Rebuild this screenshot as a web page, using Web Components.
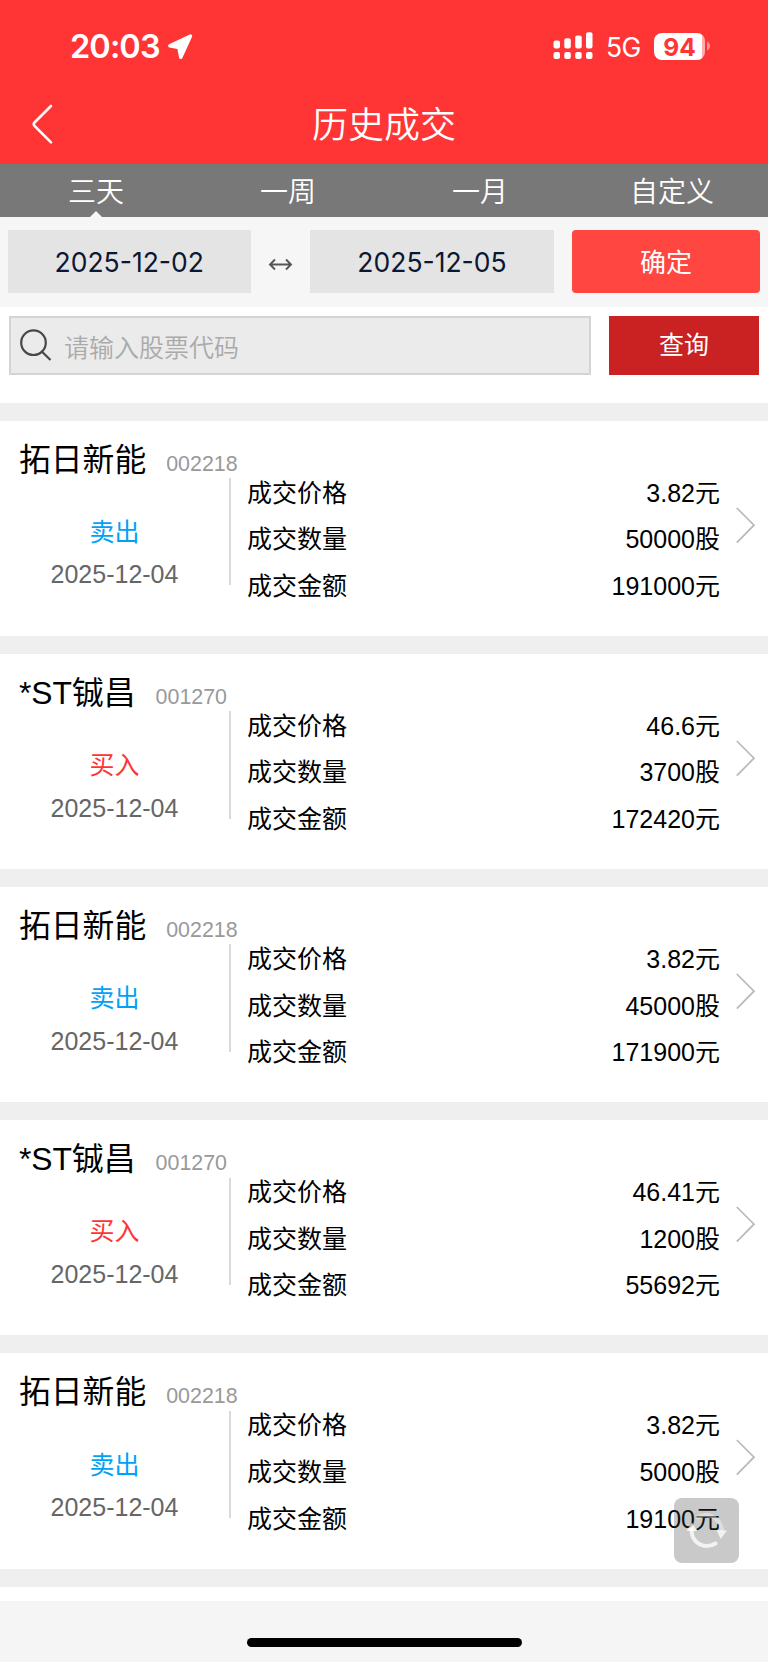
<!DOCTYPE html>
<html lang="zh-CN">
<head>
<meta charset="UTF-8">
<meta name="viewport" content="width=device-width, initial-scale=1.0">
<title>历史成交</title>
<style>
  * {
    margin: 0;
    padding: 0;
    box-sizing: border-box;
  }
  body {
    background-color: white;
    font-family: "Liberation Sans", "Noto Sans CJK SC", sans-serif;
    color: #000;
  }
</style>
</head>
<body>
<trade-app></trade-app>

<script>
class StatusBar extends HTMLElement {
  constructor() {
    super();
    this.shadowDOM = this.attachShadow({mode: 'open'});
  }

  connectedCallback() {
    this.render();
  }

  render() {
    this.shadowDOM.innerHTML = `
      <style>
        :host {
          display: flex;
          align-items: center;
          box-sizing: border-box;
          height: 92px;
          padding: 0 57px 0 70px;
          color: white;
          font-family: Inter, sans-serif;
          white-space: nowrap;
        }
        svg { display: block; flex: none; }
        .time { font-size: 32.5px; font-weight: 600; width: 97px; letter-spacing: -0.9px; }
        .signal { margin-left: auto; }
        .network { font-size: 26.5px; width: 48px; margin-left: 13px; line-height: 32px; padding-top: 2px; letter-spacing: -0.7px; }
        .battery { display: flex; align-items: center; }
        .level {
          width: 51px;
          height: 27px;
          border-radius: 8px;
          background: linear-gradient(to right, white 48px, #ffadad 48px);
          color: #ff3434;
          font-size: 24.5px;
          font-weight: 700;
          line-height: 28px;
          text-align: center;
        }
      </style>
      <span class="time">20:03</span>
      <svg width="27" height="27" viewBox="0 0 27 27"><path d="M23.500 3 2.800 12.800 11.800 14.500 13.800 24.300Z" fill="white" stroke="white" stroke-width="3.400" stroke-linejoin="round"/></svg>
      <svg class="signal" width="40" height="28" viewBox="0 0 40 28" fill="white">
        <rect x="0.500" y="8.500" width="6.500" height="8" rx="2"/><rect x="11.300" y="6.300" width="6.500" height="10.200" rx="2"/>
        <rect x="22.200" y="3.500" width="6.500" height="13" rx="2"/><rect x="33" y="0.300" width="6.500" height="16.200" rx="2"/>
        <rect x="0.500" y="20" width="6.500" height="7" rx="2"/><rect x="11.300" y="20" width="6.500" height="7" rx="2"/>
        <rect x="22.200" y="20" width="6.500" height="7" rx="2"/><rect x="33" y="20" width="6.500" height="7" rx="2"/>
      </svg>
      <span class="network">5G</span>
      <span class="battery">
        <span class="level">94</span>
        <svg width="6" height="10" viewBox="0 0 6 10"><path d="M2 .5Q5 2 5 5T2 9.500Z" fill="#ff9090"/></svg>
      </span>
    `;
  }
}
customElements.define('status-bar', StatusBar);

class NavBar extends HTMLElement {
  constructor() {
    super();
    this.shadowDOM = this.attachShadow({mode: 'open'});
  }

  connectedCallback() {
    this.render();
  }

  render() {
    this.shadowDOM.innerHTML = `
      <style>
        :host {
          display: grid;
          grid-template-columns: 84px 1fr 84px;
          align-items: center;
          height: 71.5px;
          color: white;
        }
        svg { display: block; margin: -7px 0 0 31px; }
        h1 { margin: -4px 0 0; font-size: 36px; font-weight: 350; line-height: 50px; text-align: center; }
      </style>
      <svg width="23" height="42" viewBox="0 0 23 42" fill="none" stroke="white" stroke-width="2.600" stroke-linecap="round" stroke-linejoin="round"><path d="M20 3 3.500 19.500Q2 21 3.500 22.800L20 39.300"/></svg>
      <h1><slot></slot></h1>
    `;
  }
}
customElements.define('nav-bar', NavBar);

class RangeTabs extends HTMLElement {
  constructor() {
    super();
    this.shadowDOM = this.attachShadow({mode: 'open'});
  }

  connectedCallback() {
    this.render();
  }

  render() {
    const tabs = ['三天', '一周', '一月', '自定义'];
    this.shadowDOM.innerHTML = `
      <style>
        :host {
          display: grid;
          grid-template-columns: repeat(4, 1fr);
          height: 53.5px;
          background-color: #787878;
          color: white;
          font-size: 28px;
          font-weight: 350;
          line-height: 57px;
          text-align: center;
        }
        .tab { position: relative; height: 53.5px; }
        .active::after {
          content: "";
          position: absolute;
          left: 50%;
          bottom: 0;
          margin-left: -6px;
          border: 6px solid transparent;
          border-top: 0;
          border-bottom: 6.500px solid #f6f6f6;
        }
      </style>
      ${tabs.map((t, i) => `<div class="tab ${i === 0 ? 'active' : ''}">${t}</div>`).join('')}
    `;
  }
}
customElements.define('range-tabs', RangeTabs);

class DateRange extends HTMLElement {
  constructor() {
    super();
    this.shadowDOM = this.attachShadow({mode: 'open'});
  }

  connectedCallback() {
    this.render();
  }

  render() {
    this.shadowDOM.innerHTML = `
      <style>
        :host {
          display: grid;
          grid-template-columns: 243.5px 59px 244px 206px;
          align-items: start;
          box-sizing: border-box;
          height: 90px;
          padding: 13px 0 0 7.500px;
          background-color: #f6f6f6;
          text-align: center;
        }
        .date { height: 63px; background-color: #e4e4e4; color: #0c1733; font-family: Inter, sans-serif; font-size: 26.5px; line-height: 64px; }
        svg { display: block; margin: 26px 0 0 17px; }
        .ok { height: 63px; margin-left: 18px; border-radius: 4px; background-color: #ff4641; color: white; font-size: 26px; line-height: 66px; }
      </style>
      <div class="date">${this.getAttribute('from')}</div>
      <svg width="25" height="17" viewBox="0 0 25 17" fill="none" stroke="#555" stroke-width="1.900"><path d="M2 8.500H23M7 3.500 2 8.500 7 13.500M18 3.500 23 8.500 18 13.500"/></svg>
      <div class="date">${this.getAttribute('to')}</div>
      <div class="ok">确定</div>
    `;
  }
}
customElements.define('date-range', DateRange);

class StockSearch extends HTMLElement {
  constructor() {
    super();
    this.shadowDOM = this.attachShadow({mode: 'open'});
  }

  connectedCallback() {
    this.render();
  }

  render() {
    this.shadowDOM.innerHTML = `
      <style>
        :host {
          display: flex;
          gap: 18px;
          box-sizing: border-box;
          height: 95.7px;
          padding: 9px 9px 0;
          font-size: 25px;
        }
        .box {
          flex: 1;
          display: flex;
          align-items: center;
          box-sizing: border-box;
          height: 59px;
          padding-left: 9px;
          border: 2px solid #d4d4d4;
          background-color: #ebebeb;
          color: #aaa;
          font-weight: 350;
        }
        svg { display: block; margin: -1px 12px 0 0; }
        .query { width: 150px; height: 59px; background-color: #ca2222; color: white; line-height: 59px; text-align: center; }
      </style>
      <div class="box">
        <svg width="32" height="32" viewBox="0 0 32 32" fill="none" stroke="#484848" stroke-width="2.200"><circle cx="13.500" cy="13.700" r="12.300"/><path d="M21.800 22.500 30.500 31"/></svg>
        <span>请输入股票代码</span>
      </div>
      <div class="query">查询</div>
    `;
  }
}
customElements.define('stock-search', StockSearch);

class TradeItem extends HTMLElement {
  constructor() {
    super();
    this.shadowDOM = this.attachShadow({mode: 'open'});
  }

  set trade(trade) {
    this._trade = trade;
    this.render();
  }

  render() {
    this.shadowDOM.innerHTML = `
      <style>
        :host {
          display: grid;
          grid-template-columns: 229px 1fr 48px;
          box-sizing: border-box;
          height: 233.2px;
          border-top: 18px solid #efefef;
          font-size: 25px;
          white-space: nowrap;
        }
        p { margin: 0; }
        .side { min-width: 0; padding-top: 17px; }
        .head { display: flex; align-items: baseline; gap: 20px; padding-left: 19px; height: 73.2px; line-height: 44px; }
        .name { font-size: 31.8px; }
        .code { font-size: 21.4px; color: #999; }
        .type, .day { line-height: 42.600px; text-align: center; }
        .type { color: #ff3434; }
        .type.sell { color: #00a2f8; }
        .day { color: #666; }
        .detail { padding: 49px 0 0 18px; }
        .line { float: left; margin: 8.300px 0 0 -18px; width: 2px; height: 107.500px; background-color: #d9d9d9; }
        .row { display: flex; justify-content: space-between; line-height: 46.600px; }
        svg { display: block; margin: 86px 0 0 16px; }
      </style>
      <div class="side">
        <div class="head"><span class="name">${this._trade.name}</span><span class="code">${this._trade.code}</span></div>
        <p class="type ${this._trade.type === '卖出' ? 'sell' : ''}">${this._trade.type}</p>
        <p class="day">${this._trade.day}</p>
      </div>
      <div class="detail">
        <div class="line"></div>
        <div class="row"><span>成交价格</span><span>${this._trade.price}元</span></div>
        <div class="row"><span>成交数量</span><span>${this._trade.count}股</span></div>
        <div class="row"><span>成交金额</span><span>${this._trade.amount}元</span></div>
      </div>
      <svg width="20" height="37" viewBox="0 0 20 37" fill="none" stroke="#b8b8b8" stroke-width="1.700"><path d="M.8 1 18 18.200 .8 35.600"/></svg>
    `;
  }
}
customElements.define('trade-item', TradeItem);

class TradeList extends HTMLElement {
  constructor() {
    super();
    this.shadowDOM = this.attachShadow({mode: 'open'});
  }

  set trades(trades) {
    this._trades = trades;
    this.render();
  }

  render() {
    this.shadowDOM.innerHTML = `
      <style>
        :host { display: block; height: 1198.3px; }
        .end { height: 18px; background-color: #efefef; }
      </style>
    `;
    this._trades.forEach(trade => {
      const item = document.createElement('trade-item');
      item.trade = trade;
      this.shadowDOM.appendChild(item);
    });
    const end = document.createElement('div');
    end.className = 'end';
    this.shadowDOM.appendChild(end);
  }
}
customElements.define('trade-list', TradeList);

class RefreshButton extends HTMLElement {
  constructor() {
    super();
    this.shadowDOM = this.attachShadow({mode: 'open'});
  }

  connectedCallback() {
    this.render();
  }

  render() {
    this.shadowDOM.innerHTML = `
      <style>
        :host {
          display: block;
          width: 65px;
          height: 65px;
          border-radius: 8px;
          background-color: rgba(60, 60, 60, 0.28);
        }
        svg { display: block; }
      </style>
      <svg width="65" height="65" viewBox="0 0 65 65" fill="none">
        <path d="M17.500 31.500C17.500 45 30 52 41.500 45.500" stroke="white" stroke-width="4" stroke-linecap="round" opacity=".75"/>
        <path d="M24 19.500C34 13 46 20 48 32" stroke="white" stroke-width="4" stroke-linecap="round" opacity=".4"/>
        <path d="M12.500 33 18 24.500 23 33ZM42.500 32 53 32.500 46.700 41Z" fill="white" opacity=".75"/>
      </svg>
    `;
  }
}
customElements.define('refresh-button', RefreshButton);

class TradeApp extends HTMLElement {
  constructor() {
    super();
    this.shadowDOM = this.attachShadow({mode: 'open'});
  }

  connectedCallback() {
    this.render();
  }

  render() {
    this.shadowDOM.innerHTML = `
      <style>
        :host { display: block; position: relative; width: 768px; height: 1662px; overflow: hidden; }
        header { background-color: #ff3434; }
        refresh-button { position: absolute; right: 29px; bottom: 99px; }
        footer { display: flex; justify-content: center; box-sizing: border-box; height: 61px; padding-top: 37px; background-color: #f5f5f5; }
        .home { width: 275px; height: 9px; border-radius: 5px; background-color: black; }
      </style>
      <header>
        <status-bar></status-bar>
        <nav-bar>历史成交</nav-bar>
      </header>
      <range-tabs></range-tabs>
      <date-range from="2025-12-02" to="2025-12-05"></date-range>
      <stock-search></stock-search>
      <trade-list></trade-list>
      <footer><div class="home"></div></footer>
      <refresh-button></refresh-button>
    `;
    this.shadowDOM.querySelector('trade-list').trades = [
      {name: '拓日新能', code: '002218', type: '卖出', day: '2025-12-04', price: '3.82', count: '50000', amount: '191000'},
      {name: '*ST铖昌', code: '001270', type: '买入', day: '2025-12-04', price: '46.6', count: '3700', amount: '172420'},
      {name: '拓日新能', code: '002218', type: '卖出', day: '2025-12-04', price: '3.82', count: '45000', amount: '171900'},
      {name: '*ST铖昌', code: '001270', type: '买入', day: '2025-12-04', price: '46.41', count: '1200', amount: '55692'},
      {name: '拓日新能', code: '002218', type: '卖出', day: '2025-12-04', price: '3.82', count: '5000', amount: '19100'}
    ];
  }
}
customElements.define('trade-app', TradeApp);
</script>
</body>
</html>
